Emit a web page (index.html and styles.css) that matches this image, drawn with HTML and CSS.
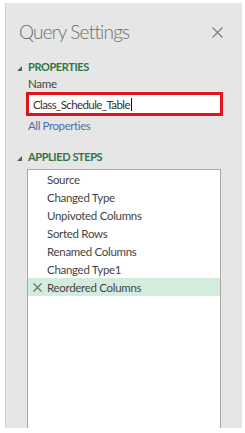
FILE: index.html
```html
<!DOCTYPE html>
<html lang="en">
<head>
    <meta charset="UTF-8">
    <meta name="viewport" content="width=device-width, initial-scale=1.0">
    <title>Query Settings</title>
    <link rel="stylesheet" href="styles.css">
</head>
<body>
    <div class="pane">
        <div class="pane-head">
            <h1 class="pane-title">Query Settings</h1>
            <span class="close">
                <svg width="11" height="11" viewBox="0 0 11 11"><path d="M0.5 0.5 L10.5 10.5 M10.5 0.5 L0.5 10.5" stroke="#7a7a7a" stroke-width="1.1" fill="none"/></svg>
            </span>
        </div>

        <div class="group">
            <h2 class="group-title">
                <svg class="caret" width="5" height="5" viewBox="0 0 5 5"><polygon points="5,0 5,5 0,5" fill="#5c5c5c"/></svg>
                PROPERTIES
            </h2>
            <div class="group-body">
                <div class="field-label">Name</div>
                <div class="name-box">Class_Schedule_Table<span class="text-cursor"></span></div>
                <a class="link" href="#">All Properties</a>
            </div>
        </div>

        <div class="group group-steps">
            <h2 class="group-title">
                <svg class="caret" width="5" height="5" viewBox="0 0 5 5"><polygon points="5,0 5,5 0,5" fill="#5c5c5c"/></svg>
                APPLIED STEPS
            </h2>
            <ul class="steps">
                <li>Source</li>
                <li>Changed Type</li>
                <li>Unpivoted Columns</li>
                <li>Sorted Rows</li>
                <li>Renamed Columns</li>
                <li>Changed Type1</li>
                <li class="selected">
                    <svg class="remove" width="9" height="9" viewBox="0 0 9 9"><path d="M0.5 0.5 L8.5 8.5 M8.5 0.5 L0.5 8.5" stroke="#6a6a6a" stroke-width="1.1" fill="none"/></svg>
                    Reordered Columns
                </li>
            </ul>
        </div>
    </div>
</body>
</html>
```

FILE: styles.css
```css
body {
    margin: 0;
    background-color: #ffffff;
    font-family: Lato, "Open Sans", sans-serif;
}
.pane {
    display: flex;
    flex-direction: column;
    box-sizing: border-box;
    width: 237px;
    height: 425px;
    margin: 3px 0 0 5px;
    padding: 0 19px 0 11px;
    background-color: #e6e6e6;
    border-left: 1px solid #d2d2d2;
}
.pane-head {
    display: flex;
    justify-content: space-between;
    align-items: flex-start;
    padding-top: 16px;
}
.pane-title {
    margin: 0 0 0 2px;
    font-size: 19px;
    font-weight: 300;
    line-height: 26px;
    letter-spacing: -0.8px;
    color: #6e6e6e;
}
.close {
    display: flex;
    margin-top: 8px;
}
.group-title {
    display: flex;
    align-items: center;
    gap: 6px;
    margin: 15px 0 0;
    font-size: 11px;
    font-weight: 700;
    line-height: 14px;
    letter-spacing: -0.4px;
    color: #2f7545;
}
.caret {
    margin-top: 2px;
}
.group-body {
    margin-left: 11px;
}
.field-label {
    margin-top: 3px;
    font-size: 11.5px;
    line-height: 14px;
    letter-spacing: -0.3px;
    color: #444444;
}
.name-box {
    display: flex;
    align-items: center;
    box-sizing: border-box;
    width: calc(100% + 2px);
    height: 24px;
    margin: 1px 0 0 -2px;
    padding: 0 4px;
    background-color: #ffffff;
    border: 3px solid #e0141c;
    font-size: 11.5px;
    letter-spacing: -0.6px;
    color: #333333;
}
.text-cursor {
    width: 1px;
    height: 13px;
    margin-left: 1px;
    background-color: #111111;
}
.link {
    display: block;
    margin-top: 3px;
    font-size: 11.5px;
    line-height: 14px;
    letter-spacing: -0.4px;
    color: #4a6fa8;
    text-decoration: none;
}
.group-steps {
    display: flex;
    flex-direction: column;
    flex: 1;
}
.group-steps .group-title {
    margin-top: 17px;
}
.steps {
    flex: 1;
    list-style: none;
    margin: 5px 2px 0 10px;
    padding: 0;
    background-color: #ffffff;
    border: 1px solid #a9a9a9;
    border-bottom: none;
}
.steps li {
    display: flex;
    align-items: center;
    height: 18px;
    padding-left: 19px;
    font-size: 11.5px;
    letter-spacing: -0.3px;
    color: #444444;
}
.steps li.selected {
    padding-left: 5px;
    gap: 5px;
    background-color: #d4ecdd;
}
```
